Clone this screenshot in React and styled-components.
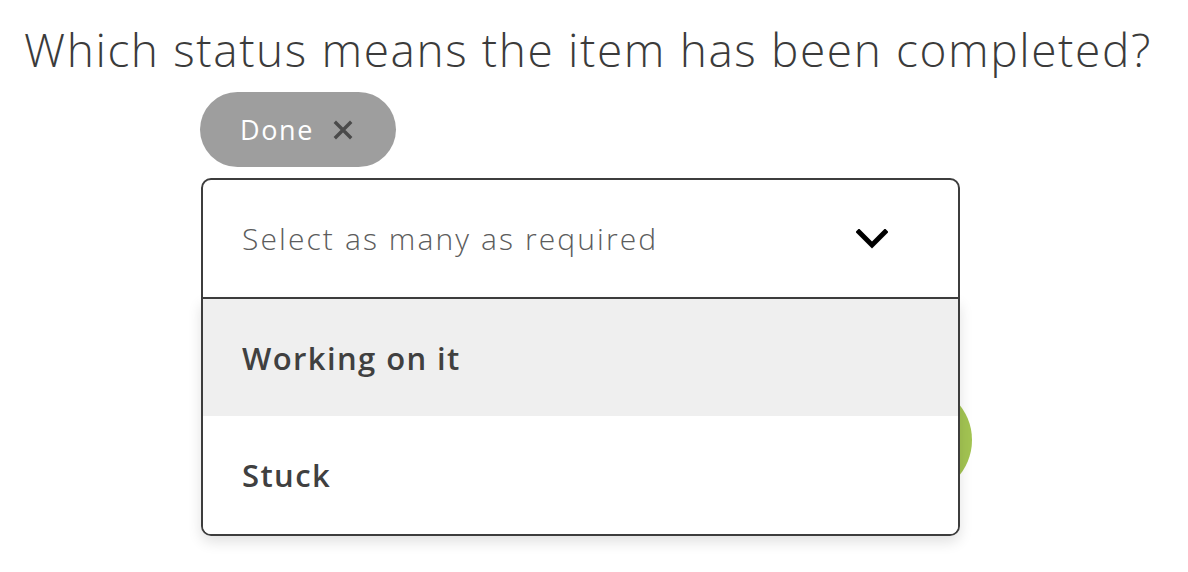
import React from "react";
import styled, { createGlobalStyle } from "styled-components";

const Global = createGlobalStyle`
  html, body { margin: 0; padding: 0; background: #ffffff; }
  body { font-family: "Open Sans", "Liberation Sans", sans-serif; color: #3a3a3a; }
  * { box-sizing: border-box; }
`;

const Page = styled.div`
  width: 1188px;
  height: 572px;
  overflow: hidden;
  padding: 20px 0 0 24px;
`;

const Title = styled.h1`
  margin: 0;
  font-size: 46px;
  line-height: 58px;
  font-weight: 350;
  letter-spacing: 1.6px;
  color: #3b3b3b;
  white-space: nowrap;
`;

const Form = styled.div`
  margin: 14px 0 0 176px;
  width: 772px;
  display: flex;
  flex-direction: column;
  align-items: flex-start;
`;

const Chip = styled.div`
  height: 75px;
  width: 196px;
  border-radius: 38px;
  background: #9e9e9e;
  display: flex;
  align-items: center;
  padding-left: 40px;
  gap: 19px;
  color: #ffffff;
  font-size: 27px;
  font-weight: 400;
  letter-spacing: 1.6px;
`;

const ChipClose = styled.span`
  display: flex;
  color: #4a4a4a;
`;

const SelectWrap = styled.div`
  position: relative;
  margin-top: 11px;
  margin-left: 1px;
  width: 759px;
`;

const Control = styled.div`
  height: 121px;
  border: 2px solid #3d3d3d;
  border-radius: 10px 10px 0 0;
  background: #ffffff;
  display: flex;
  align-items: center;
  justify-content: space-between;
  padding: 0 70px 0 39px;
`;

const Placeholder = styled.span`
  font-size: 30px;
  font-weight: 300;
  letter-spacing: 2.1px;
  color: #5c5c5c;
`;

const Menu = styled.ul`
  position: absolute;
  left: 0;
  right: 0;
  top: 121px;
  margin: 0;
  padding: 0;
  list-style: none;
  background: #ffffff;
  border: 2px solid #3d3d3d;
  border-top: none;
  border-radius: 0 0 10px 10px;
  overflow: hidden;
  box-shadow: 0 6px 14px rgba(0, 0, 0, 0.12);
  z-index: 2;
`;

const Option = styled.li`
  height: ${(p) => p.$h}px;
  display: flex;
  align-items: center;
  padding-left: 39px;
  background: ${(p) => (p.$active ? "#efefef" : "#ffffff")};
  font-size: 31px;
  font-weight: 600;
  letter-spacing: 1.4px;
  color: #404040;
`;

const NextRow = styled.div`
  align-self: stretch;
  display: flex;
  justify-content: flex-end;
  margin-top: 85px;
`;

const NextButton = styled.button`
  width: 112px;
  height: 112px;
  border-radius: 50%;
  border: none;
  background: #a3c452;
  padding: 0;
`;

export default function App() {
  return (
    <>
      <Global />
      <Page>
        <Title>Which status means the item has been completed?</Title>
        <Form>
          <Chip>
            <span>Done</span>
            <ChipClose>
              <svg width="20" height="20" viewBox="0 0 20 20">
                <path d="M3 3 L17 17 M17 3 L3 17" stroke="currentColor" strokeWidth="3.4" strokeLinecap="square" />
              </svg>
            </ChipClose>
          </Chip>
          <SelectWrap>
            <Control>
              <Placeholder>Select as many as required</Placeholder>
              <svg width="32" height="20" viewBox="0 0 32 20">
                <path d="M3 3 L16 16 L29 3" fill="none" stroke="#000" strokeWidth="5" strokeLinecap="square" strokeLinejoin="miter" />
              </svg>
            </Control>
            <Menu>
              <Option $active $h={117}>Working on it</Option>
              <Option $h={118}>Stuck</Option>
            </Menu>
          </SelectWrap>
          <NextRow>
            <NextButton aria-label="Next" />
          </NextRow>
        </Form>
      </Page>
    </>
  );
}
